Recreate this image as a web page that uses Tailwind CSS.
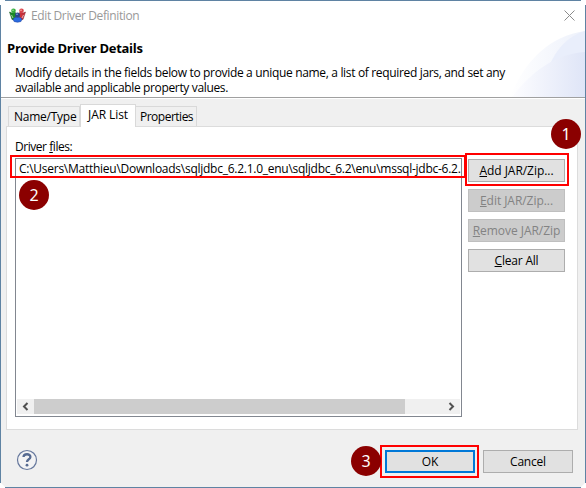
<!DOCTYPE html>
<html lang="en"><head><meta charset="utf-8"><title>Edit Driver Definition</title>
<script src="https://cdn.jsdelivr.net/npm/@tailwindcss/browser@4"></script></head>
<body class="bg-white">
<div class="relative flex h-[488px] w-[586px] flex-col overflow-hidden border border-[#5f83a3] bg-[#f0f0f0] font-['Open_Sans','Noto_Sans',sans-serif] text-[12px] leading-[15px] whitespace-nowrap text-black">
  <header class="relative h-[97px] shrink-0 border-b border-[#a0a0a0] bg-white">
    <svg class="absolute top-0 right-0" width="75" height="96" viewBox="510 1 75 96">
      <defs>
        <linearGradient id="a"><stop offset="0" stop-color="#fff"/><stop offset="1" stop-color="#edf1fb"/></linearGradient>
        <linearGradient id="b"><stop offset="0" stop-color="#fdfdff"/><stop offset="1" stop-color="#dfe5f7"/></linearGradient>
      </defs>
      <path d="M510 97C525 60 550 36 585 31V97Z" fill="url(#a)"/>
      <path d="M551 62C559 46 569 36 585 31V62Z" fill="#e9eefb"/>
      <path d="M512 97C531 72 555 54 585 52V97Z" fill="url(#b)"/>
    </svg>
    <div class="relative flex h-[29px] items-center pl-2">
      <svg width="17" height="15" viewBox="0 0 17 15">
        <path d="M.5 4L3 5L6 4L8 8L7 12L3 11.5Z" fill="#1d8b26" stroke="#0d4f18" stroke-width=".5"/>
        <path d="M16.5 4L14 5L11 4L9 8L10 12L14 11.5Z" fill="#c9303a" stroke="#7c2230" stroke-width=".5"/>
        <path d="M4 11Q6 8.5 8.5 9Q11 8.500 13 11L12 13.500Q8.500 15 5 13.500Z" fill="#2b6be0" stroke="#1b3f9c" stroke-width=".5"/>
        <circle cx="4.500" cy="2.800" r="2.300" fill="#35ad3d"/><circle cx="12.500" cy="2.800" r="2.300" fill="#d9434b"/><circle cx="8.500" cy="7" r="2.500" fill="#2a448c"/>
        <circle cx="4" cy="2.200" r=".8" fill="#a5e6a1"/><circle cx="12" cy="2.200" r=".8" fill="#ffb5ae"/><circle cx="8" cy="6.200" r=".8" fill="#8fb2ea"/>
        <path d="M2.500 7L4 10M14.500 7L13 10" stroke="#fff" stroke-opacity=".6"/>
      </svg>
      <span class="ml-[5px] tracking-[-0.38px] text-[#999]">Edit Driver Definition</span>
      <svg class="mr-[10px] ml-auto" width="11" height="11" viewBox="0 0 11 11"><path d="M.5.5L10.5 10.5M10.5.5L.5 10.5" stroke="#8b8b8b"/></svg>
    </div>
    <h1 class="relative mt-[9px] pl-[6px] text-[13px] leading-[18px] font-bold tracking-[-0.28px]">Provide Driver Details</h1>
    <div class="relative mt-[8px] pl-[14px]"><p class="tracking-[-0.335px]">Modify details in the fields below to provide a unique name, a list of required jars, and set any</p><p class="tracking-[-0.35px]">available and applicable property values.</p></div>
  </header>
  <main class="border-t border-white px-[5px] pt-[5px]">
    <div class="relative z-10 flex h-[22px] items-end pl-[2px]">
      <div class="flex h-5 w-[72px] items-center border border-b-0 border-[#d9d9d9] pl-[5px]"><span class="tracking-[-0.25px]">Name/Type</span></div>
      <div class="-mb-px flex h-[23px] w-[56px] border border-b-0 border-[#d9d9d9] bg-white pt-[2px] pl-[7px]"><span class="tracking-[-0.08px]">JAR List</span></div>
      <div class="flex h-5 w-[61px] items-center border border-b-0 border-l-0 border-[#d9d9d9] pl-[4px]"><span class="tracking-[-0.5px]">Properties</span></div>
    </div>
    <section class="flex h-[304px] w-[572px] flex-col border border-[#dcdcdc] bg-white pl-2">
      <p class="mt-[12px] h-[19px]"><span class="tracking-[-0.45px]">Driver <u>f</u>iles:</span></p>
      <div class="flex">
        <div class="flex h-[259px] w-[447px] flex-col border border-[#828790] pt-[2px]">
          <div class="pl-[3px]"><span class="tracking-[-0.26px]">C:\Users\Matthieu\Downloads\sqljdbc_6.2.1.0_enu\sqljdbc_6.2\enu\mssql-jdbc-6.2.</span></div>
          <div class="mt-auto mr-px mb-[2px] ml-px flex h-[15px] bg-[#f0f0f0]">
            <svg width="17" height="15"><path d="M10.500 4L7 7.5L10.500 11" fill="none" stroke="#505050" stroke-width="2"/></svg>
            <div class="w-[371px] bg-[#cdcdcd]"></div>
            <svg class="ml-auto" width="17" height="15"><path d="M6.500 4L10 7.5L6.500 11" fill="none" stroke="#505050" stroke-width="2"/></svg>
          </div>
        </div>
        <div class="ml-[6px] flex flex-col gap-[7px] pt-px">
          <button class="h-[23px] w-[97px] border border-[#adadad] bg-[#e1e1e1]"><span class="tracking-[-0.05px]"><u>A</u>dd JAR/Zip...</span></button>
          <button class="h-[23px] w-[97px] border border-[#bfbfbf] bg-[#ccc] text-[#838383]"><span class="tracking-[-0.05px]"><u>E</u>dit JAR/Zip...</span></button>
          <button class="h-[23px] w-[97px] border border-[#bfbfbf] bg-[#ccc] text-[#838383]"><span class="tracking-[-0.05px]"><u>R</u>emove JAR/Zip</span></button>
          <button class="h-[23px] w-[97px] border border-[#adadad] bg-[#e1e1e1]"><span class="tracking-[-0.2px]"><u>C</u>lear All</span></button>
        </div>
      </div>
    </section>
  </main>
  <footer class="flex h-[57px] items-start pt-[20px] pr-[12px] pl-[15px]">
    <svg class="-mt-px" width="22" height="22" viewBox="0 0 22 22"><circle cx="11" cy="11" r="9.5" fill="#f3f3f4" stroke="#66789d" stroke-width="1.2"/><path d="M7.5 8C7.7 4.3 14.5 4.4 14.4 8C14.3 10.5 11 10.1 11 13" fill="none" stroke="#566a91" stroke-width="2.3"/><circle cx="11" cy="16.2" r="1.4" fill="#566a91"/></svg>
    <button class="ml-auto h-[23px] w-[90px] border-2 border-[#0078d7] bg-[#e1e1e1]">OK</button>
    <button class="ml-2 h-[23px] w-[90px] border border-[#adadad] bg-[#e1e1e1]"><span class="tracking-[-0.2px]">Cancel</span></button>
  </footer>
</div>
<div class="absolute top-[155px] left-[10px] h-[23px] w-[456px] border-2 border-[#f00]"></div>
<div class="absolute top-[153px] left-[465px] h-[33px] w-[104px] border-2 border-[#f00]"></div>
<div class="absolute top-[445px] left-[380px] h-[33px] w-[99px] border-2 border-[#f00]"></div>
<div class="absolute top-[119px] left-[551px] flex size-[30px] items-center justify-center rounded-full bg-[#8b0000] font-['Noto_Sans',sans-serif] text-[16px] leading-none text-white">1</div>
<div class="absolute top-[180px] left-[19px] flex size-[30px] items-center justify-center rounded-full bg-[#8b0000] font-['Noto_Sans',sans-serif] text-[16px] leading-none text-white">2</div>
<div class="absolute top-[446px] left-[351px] flex size-[30px] items-center justify-center rounded-full bg-[#8b0000] font-['Noto_Sans',sans-serif] text-[16px] leading-none text-white">3</div>
<div class="absolute top-0 left-0 h-[5px] w-px bg-white"></div><div class="absolute top-0 left-0 h-px w-[5px] bg-white"></div>
<div class="absolute top-0 right-0 h-[5px] w-px bg-white"></div><div class="absolute top-0 right-0 h-px w-[5px] bg-white"></div>
<svg class="absolute bottom-0 left-0" width="5" height="5"><path d="M0 0H1L5 4V5H0Z" fill="#fff"/></svg>
<svg class="absolute right-0 bottom-0" width="5" height="5"><path d="M5 0H4L0 4V5H5Z" fill="#fff"/></svg>
</body></html>
